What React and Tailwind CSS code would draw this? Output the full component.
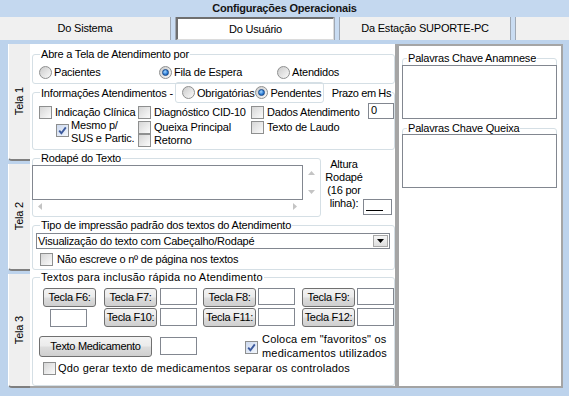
import React from 'react';

// Win7 style form: Configurações Operacionais / Do Usuário

function CheckBox({ checked = false }) {
  return (
    <span
      className={`flex h-[13px] w-[13px] shrink-0 items-center justify-center border border-[#8e8f8f] ${
        checked ? 'bg-linear-to-br from-[#cdd9ee] to-[#f3f7fd]' : 'bg-linear-to-br from-[#d6d6d6] to-[#fbfbfb]'
      }`}
    >
      {checked && (
        <svg width="11" height="11" viewBox="0 0 11 11">
          <path d="M2.2 5.6 L4.4 8.2 L8.8 2.4" fill="none" stroke="#3c5a9e" strokeWidth="1.9" />
        </svg>
      )}
    </span>
  );
}

function Radio({ on = false }) {
  return (
    <span className="flex h-[13px] w-[13px] shrink-0 items-center justify-center rounded-full border border-[#8e8f8f] bg-linear-to-br from-[#cbcbcb] to-[#fafafa]">
      {on && (
        <span className="h-[7px] w-[7px] rounded-full border border-[#17488a] bg-[radial-gradient(circle_at_40%_35%,#a6d8ff,#2b7bd4_60%,#174f96)]" />
      )}
    </span>
  );
}

function Group({ legend, className = '', legendClass = 'ml-[7px]', children }) {
  return (
    <fieldset className={`rounded-[3px] border border-[#d5dfe5] ${className}`}>
      <legend className={`whitespace-nowrap px-[1px] leading-[12px] ${legendClass}`}>{legend}</legend>
      {children}
    </fieldset>
  );
}

function Box({ className = '', children }) {
  return <div className={`shrink-0 border border-[#828790] bg-white ${className}`}>{children}</div>;
}

function Btn({ className = '', children }) {
  return (
    <button
      className={`flex shrink-0 items-center justify-center whitespace-nowrap rounded-[3px] border border-[#707070] bg-[linear-gradient(#f3f3f3,#ebebeb_48%,#dddddd_52%,#cfcfcf)] leading-none tracking-[-0.3px] text-black ${className}`}
    >
      {children}
    </button>
  );
}

function Item({ label, className = '' }) {
  return (
    <div className={`flex h-[13px] items-center gap-[3px] whitespace-nowrap ${className}`}>
      <CheckBox />
      <span>{label}</span>
    </div>
  );
}

function VTab({ label, className = '' }) {
  return (
    <div
      className={`flex items-center justify-center rounded-bl-[4px] border-b-2 border-l border-b-[#7f7f7f] border-l-white bg-[#efefef] ${className}`}
    >
      <span className="rotate-180 whitespace-nowrap [writing-mode:vertical-rl]">{label}</span>
    </div>
  );
}

function Sep() {
  return <div className="w-[6px] shrink-0 border-x border-[#9fa8b4] bg-[#c9dcf2]" />;
}

function Arrow({ dir }) {
  const d = {
    up: 'M0 4 L3.5 0 L7 4 Z',
    down: 'M0 0 L3.5 4 L7 0 Z',
    left: 'M4 0 L0 3.5 L4 7 Z',
    right: 'M0 0 L4 3.5 L0 7 Z',
  }[dir];
  const vert = dir === 'up' || dir === 'down';
  return (
    <svg width={vert ? 7 : 4} height={vert ? 4 : 7} viewBox={vert ? '0 0 7 4' : '0 0 4 7'}>
      <path d={d} fill="#c4c4c4" />
    </svg>
  );
}

export default function App() {
  return (
    <div className="flex h-[396px] w-[569px] flex-col overflow-hidden bg-[#bdd3ec] font-['Liberation_Sans',Arial,sans-serif] text-[11px] leading-[13px] tracking-[-0.2px] text-black">
      {/* title */}
      <div className="flex h-[17px] shrink-0 items-center justify-center bg-[#c4d8ef] font-bold text-[#141414]">
        Configurações Operacionais
      </div>

      {/* top tabs */}
      <div className="flex h-[23px] shrink-0 bg-[#f0f0f0]">
        <div className="flex w-[170px] items-center justify-center">Do Sistema</div>
        <Sep />
        <div className="flex w-[158px] items-center justify-center border-t-2 border-l-2 border-r border-b border-t-[#6f6f6f] border-l-[#6f6f6f] border-r-[#dcdcdc] border-b-[#dcdcdc] bg-white pt-[1px]">
          Do Usuário
        </div>
        <Sep />
        <div className="flex w-[170px] items-center justify-center">Da Estação SUPORTE-PC</div>
        <Sep />
        <div className="flex-1" />
      </div>

      {/* body */}
      <div className="flex flex-1 pb-[8px] pl-[8px] pr-[6px] pt-[4px]">
        <div className="flex w-[22px] shrink-0 flex-col gap-[3px]">
          <VTab label="Tela 1" className="h-[117px]" />
          <VTab label="Tela 2" className="h-[107px]" />
          <VTab label="Tela 3" className="flex-1" />
        </div>

        <div className="flex flex-1 border-b-2 border-[#a3a3a3]">
          {/* main content */}
          <div className="w-[365px] shrink-0 bg-white pl-[2px]">
            <Group legend="Abre a Tela de Atendimento por" className="mt-[4px] h-[36px]">
              <div className="flex items-center whitespace-nowrap pl-[6px] pt-[6px]">
                <label className="flex w-[120px] items-center gap-[2px]">
                  <Radio />
                  <span>Pacientes</span>
                </label>
                <label className="flex w-[118px] items-center gap-[2px]">
                  <Radio on />
                  <span>Fila de Espera</span>
                </label>
                <label className="flex items-center gap-[2px]">
                  <Radio />
                  <span>Atendidos</span>
                </label>
              </div>
            </Group>

            <Group
              className="-mt-[2px] h-[68px]"
              legend={
                <div className="flex w-[350px] items-center whitespace-nowrap">
                  <span className="shrink-0">Informações Atendimentos</span>
                  <span className="ml-[3px] shrink-0">-</span>
                  <div className="ml-[2px] flex h-[21px] shrink-0 items-center rounded-[3px] border border-[#d5dfe5] pl-[6px] pr-[2px]">
                    <Radio />
                    <span className="ml-[2px]">Obrigatórias</span>
                    <span className="ml-[1px]">
                      <Radio on />
                    </span>
                    <span className="ml-[2px]">Pendentes</span>
                  </div>
                  <span className="ml-auto shrink-0 tracking-[-0.4px]">Prazo em Hs</span>
                </div>
              }
            >
              <div className="flex">
                <div className="flex pl-[6px] pt-[3px]">
                  <div className="w-[99px]">
                    <Item label="Indicação Clínica" />
                    <div className="ml-[17px] flex whitespace-nowrap">
                      <span className="mt-[5px]">
                        <CheckBox checked />
                      </span>
                      <span className="ml-[2px] leading-[13px]">
                        Mesmo p/
                        <br />
                        SUS e Partic.
                      </span>
                    </div>
                  </div>
                  <div className="w-[113px]">
                    <Item label="Diagnóstico CID-10" />
                    <Item label="Queixa Principal" className="mt-[2px]" />
                    <Item label="Retorno" />
                  </div>
                  <div>
                    <Item label="Dados Atendimento" />
                    <Item label="Texto de Laudo" className="mt-[2px]" />
                  </div>
                </div>
                <Box className="ml-auto h-[16px] w-[26px] pl-[2px]">0</Box>
              </div>
            </Group>

            <div className="mt-[2px] flex h-[65px]">
              <Group legend="Rodapé do Texto" className="h-[65px] w-[288px] shrink-0">
                <div className="-ml-[1px] mt-[1px] grid grid-cols-[271px_17px] grid-rows-[35px_13px]">
                  <div className="border border-[#828790] bg-white" />
                  <div className="flex flex-col items-center justify-between py-[6px]">
                    <Arrow dir="up" />
                    <Arrow dir="down" />
                  </div>
                  <div className="flex items-center justify-between px-[6px]">
                    <Arrow dir="left" />
                    <Arrow dir="right" />
                  </div>
                  <div />
                </div>
              </Group>
              <div className="ml-[4px] flex pt-[6px]">
                <div className="w-[38px] whitespace-nowrap text-center leading-[13px]">
                  Altura
                  <br />
                  Rodapé
                  <br />
                  (16 por
                  <br />
                  linha):
                </div>
                <Box className="mt-[41px] h-[16px] w-[29px] pl-[2px] pt-[10px]">
                  <div className="h-px w-[17px] bg-black" />
                </Box>
              </div>
            </div>

            <Group legend="Tipo de impressão padrão dos textos do Atendimento" className="mt-[2px] h-[51px]">
              <div className="ml-[3px] mt-[2px] flex h-[16px] w-[354px] items-center border border-[#828790] bg-white pl-[1px]">
                <span className="flex-1 whitespace-nowrap">Visualização do texto com Cabeçalho/Rodapé</span>
                <span className="mr-[1px] flex h-[12px] w-[15px] items-center justify-center border border-[#a8a8a8] bg-linear-to-b from-[#f6f6f6] to-[#dedede]">
                  <svg width="7" height="4" viewBox="0 0 7 4">
                    <path d="M0 0 L7 0 L3.5 4 Z" fill="#000" />
                  </svg>
                </span>
              </div>
              <div className="ml-[7px] mt-[4px] flex items-center gap-[4px] whitespace-nowrap">
                <CheckBox />
                <span>Não escreve o nº de página nos textos</span>
              </div>
            </Group>

            <Group
              legend={<span className="tracking-[0.2px]">Textos para inclusão rápida no Atendimento</span>}
              className="mt-[1px] h-[115px]"
            >
              <div className="mt-[5px] flex items-start">
                <Btn className="ml-[10px] h-[19px] w-[53px]">Tecla F6:</Btn>
                <Btn className="ml-[8px] h-[19px] w-[53px]">Tecla F7:</Btn>
                <Box className="ml-[3px] h-[17px] w-[37px]" />
                <Btn className="ml-[6px] h-[19px] w-[53px]">Tecla F8:</Btn>
                <Box className="ml-[2px] h-[17px] w-[37px]" />
                <Btn className="ml-[7px] h-[19px] w-[53px]">Tecla F9:</Btn>
                <Box className="ml-[2px] h-[17px] w-[37px]" />
              </div>
              <div className="mt-[1px] flex items-start">
                <Box className="ml-[17px] mt-[1px] h-[18px] w-[37px]" />
                <Btn className="ml-[17px] h-[19px] w-[53px]">Tecla F10:</Btn>
                <Box className="ml-[3px] h-[18px] w-[37px]" />
                <Btn className="ml-[6px] h-[19px] w-[53px]">Tecla F11:</Btn>
                <Box className="ml-[2px] h-[18px] w-[37px]" />
                <Btn className="ml-[7px] h-[19px] w-[53px]">Tecla F12:</Btn>
                <Box className="ml-[2px] h-[18px] w-[37px]" />
              </div>
              <div className="mt-[5px] flex items-center">
                <Btn className="ml-[6px] h-[21px] w-[113px]">Texto Medicamento</Btn>
                <Box className="ml-[8px] h-[18px] w-[37px]" />
                <span className="ml-[48px] mt-[3px]">
                  <CheckBox checked />
                </span>
                <span className="ml-[4px] whitespace-nowrap leading-[14px] tracking-[0.2px]">
                  Coloca em "favoritos" os
                  <br />
                  medicamentos utilizados
                </span>
              </div>
              <div className="ml-[10px] mt-[2px] flex items-center gap-[2px] whitespace-nowrap">
                <CheckBox />
                <span className="tracking-[0.2px]">Qdo gerar texto de medicamentos separar os controlados</span>
              </div>
            </Group>
          </div>

          {/* right panel */}
          <div className="flex-1 border-l-4 border-r-2 border-t-2 border-[#a5a5a5] bg-white">
            <Group legend="Palavras Chave Anamnese" legendClass="ml-[4px]" className="ml-[3px] mt-[6px] h-[67px] w-[155px]">
              <Box className="-mx-[1px] mt-[1px] h-[54px] border-[#6e6e6e]" />
            </Group>
            <Group legend="Palavras Chave Queixa" legendClass="ml-[4px]" className="ml-[3px] mt-[3px] h-[66px] w-[155px]">
              <Box className="-mx-[1px] h-[54px] border-[#6e6e6e]" />
            </Group>
          </div>
        </div>
      </div>
    </div>
  );
}
